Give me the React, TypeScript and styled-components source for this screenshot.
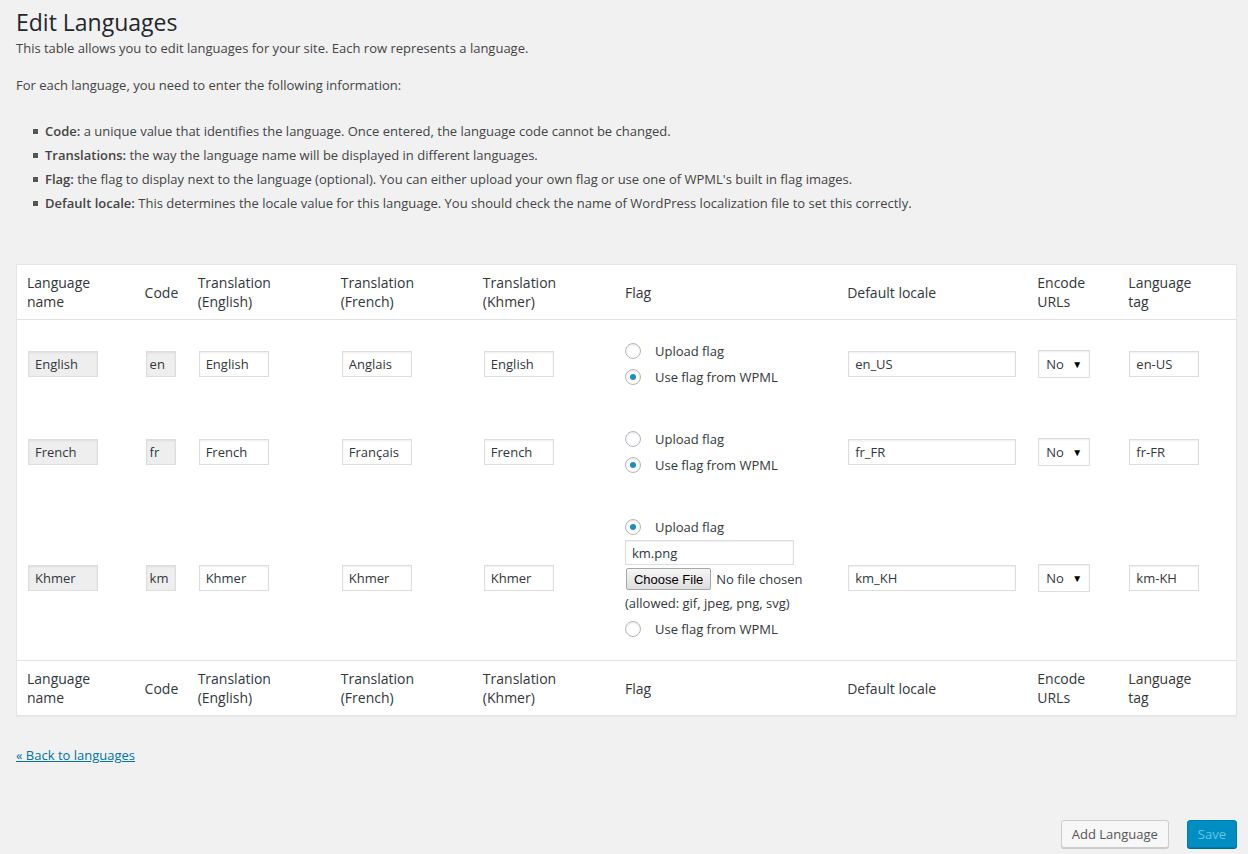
import React from "react";
import styled, { createGlobalStyle } from "styled-components";

const GlobalStyle = createGlobalStyle`
  html, body {
    margin: 0;
    padding: 0;
    background: #f1f1f1;
  }
  body {
    font-family: "Open Sans", "Liberation Sans", sans-serif;
    font-size: 13px;
    line-height: 1.5;
    color: #444;
  }
`;

type Lang = {
  name: string;
  code: string;
  english: string;
  french: string;
  khmer: string;
  locale: string;
  tag: string;
  upload: boolean;
  file?: string;
};

const languages: Lang[] = [
  { name: "English", code: "en", english: "English", french: "Anglais", khmer: "English", locale: "en_US", tag: "en-US", upload: false },
  { name: "French", code: "fr", english: "French", french: "Français", khmer: "French", locale: "fr_FR", tag: "fr-FR", upload: false },
  { name: "Khmer", code: "km", english: "Khmer", french: "Khmer", khmer: "Khmer", locale: "km_KH", tag: "km-KH", upload: true, file: "km.png" },
];

const columns = [
  { label: ["Language", "name"], width: 118 },
  { label: ["Code"], width: 53 },
  { label: ["Translation", "(English)"], width: 143 },
  { label: ["Translation", "(French)"], width: 142 },
  { label: ["Translation", "(Khmer)"], width: 142 },
  { label: ["Flag"], width: 222 },
  { label: ["Default locale"], width: 190 },
  { label: ["Encode", "URLs"], width: 91 },
  { label: ["Language", "tag"], width: 118 },
];

const App = () => {
  const headRow = (
    <tr>
      {columns.map((c, i) => (
        <HeadCell key={i}>
          {c.label.map((l, j) => (
            <HeadLine key={j}>{l}</HeadLine>
          ))}
        </HeadCell>
      ))}
    </tr>
  );

  return (
    <>
      <GlobalStyle />
      <Wrap>
        <Title>Edit Languages</Title>
        <Intro>This table allows you to edit languages for your site. Each row represents a language.</Intro>
        <Intro $gap>For each language, you need to enter the following information:</Intro>
        <InfoList>
          <InfoItem>
            <span>
              <b>Code:</b> a unique value that identifies the language. Once entered, the language code cannot be changed.
            </span>
          </InfoItem>
          <InfoItem>
            <span>
              <b>Translations:</b> the way the language name will be displayed in different languages.
            </span>
          </InfoItem>
          <InfoItem>
            <span>
              <b>Flag:</b> the flag to display next to the language (optional). You can either upload your own flag or use one of WPML's built in flag images.
            </span>
          </InfoItem>
          <InfoItem>
            <span>
              <b>Default locale:</b> This determines the locale value for this language. You should check the name of WordPress localization file to set this correctly.
            </span>
          </InfoItem>
        </InfoList>

        <LangTable>
          <colgroup>
            {columns.map((c, i) => (
              <col key={i} style={{ width: c.width }} />
            ))}
          </colgroup>
          <thead>{headRow}</thead>
          <tbody>
            {languages.map((l) => (
              <tr key={l.code}>
                <Cell>
                  <TextInput readOnly $disabled $w={70} value={l.name} />
                </Cell>
                <Cell>
                  <TextInput readOnly $disabled $w={30} $pad={3} value={l.code} />
                </Cell>
                <Cell>
                  <TextInput readOnly $w={70} value={l.english} />
                </Cell>
                <Cell>
                  <TextInput readOnly $w={70} value={l.french} />
                </Cell>
                <Cell>
                  <TextInput readOnly $w={70} value={l.khmer} />
                </Cell>
                <Cell>
                  <FlagBox>
                    <RadioLine>
                      <Radio $checked={l.upload} />
                      Upload flag
                    </RadioLine>
                    {l.upload && (
                      <>
                        <FileName readOnly value={l.file} />
                        <FileRow>
                          <ChooseButton type="button">Choose File</ChooseButton>
                          <span>No file chosen</span>
                        </FileRow>
                        <Allowed>(allowed: gif, jpeg, png, svg)</Allowed>
                      </>
                    )}
                    <RadioLine $after={l.upload}>
                      <Radio $checked={!l.upload} />
                      Use flag from WPML
                    </RadioLine>
                  </FlagBox>
                </Cell>
                <Cell>
                  <TextInput readOnly $w={168} value={l.locale} />
                </Cell>
                <Cell>
                  <SelectBox>
                    <span>No</span>
                    <Caret>▼</Caret>
                  </SelectBox>
                </Cell>
                <Cell>
                  <TextInput readOnly $w={70} value={l.tag} />
                </Cell>
              </tr>
            ))}
          </tbody>
          <tfoot>{headRow}</tfoot>
        </LangTable>

        <BackLink href="#">« Back to languages</BackLink>

        <Actions>
          <Button type="button">Add Language</Button>
          <Button type="button" $primary>
            Save
          </Button>
        </Actions>
      </Wrap>
    </>
  );
};

export default App;

const Wrap = styled.div`
  padding: 0 11px 0 16px;
  min-height: 854px;
  box-sizing: border-box;
`;

const Title = styled.h1`
  margin: 0;
  padding-top: 8px;
  font-size: 23px;
  font-weight: 400;
  line-height: 29px;
  color: #23282d;
`;

const Intro = styled.p<{ $gap?: boolean }>`
  margin: ${(p) => (p.$gap ? "17px" : "1px")} 0 0;
  line-height: 20px;
  color: #444;
`;

const InfoList = styled.ul`
  list-style: none;
  margin: 27px 0 0;
  padding: 0;
`;

const InfoItem = styled.li`
  display: flex;
  align-items: center;
  padding-left: 17px;
  height: 18px;
  margin-bottom: 6px;
  line-height: 18px;
  color: #444;

  &::before {
    content: "";
    flex: none;
    width: 5px;
    height: 5px;
    margin-right: 7px;
    background: #555;
  }

  b {
    font-weight: 600;
  }
`;

const LangTable = styled.table`
  margin-top: 52px;
  width: 100%;
  table-layout: fixed;
  border-collapse: collapse;
  border: 1px solid #e5e5e5;
  background: #fff;
  box-shadow: 0 1px 1px rgba(0, 0, 0, 0.04);
  color: #32373c;

  thead tr {
    border-bottom: 1px solid #e1e1e1;
  }
  tfoot tr {
    border-top: 1px solid #e1e1e1;
  }
`;

const HeadCell = styled.th`
  padding: 8px 10px;
  height: 38px;
  text-align: left;
  vertical-align: middle;
  font-weight: 400;
  font-size: 14px;
  line-height: 19px;
  color: #32373c;
`;

const HeadLine = styled.div`
  white-space: nowrap;
`;

const Cell = styled.td`
  padding: 18px 10px;
  vertical-align: middle;
  line-height: 26px;
`;

const TextInput = styled.input<{ $w: number; $disabled?: boolean; $pad?: number }>`
  display: block;
  box-sizing: border-box;
  width: ${(p) => p.$w}px;
  height: 26px;
  margin: 0 0 0 1px;
  padding: 0 ${(p) => p.$pad ?? 6}px;
  border: 1px solid #ddd;
  border-radius: 0;
  outline: none;
  box-shadow: inset 0 1px 2px rgba(0, 0, 0, 0.07);
  background: ${(p) => (p.$disabled ? "#eee" : "#fff")};
  font-family: "Open Sans", "Liberation Sans", sans-serif;
  font-size: 13px;
  color: #32373c;
`;

const FlagBox = styled.div`
  display: flex;
  flex-direction: column;
  align-items: flex-start;
`;

const RadioLine = styled.label<{ $after?: boolean }>`
  display: flex;
  align-items: center;
  height: 26px;
  margin-top: ${(p) => (p.$after ? "1px" : "0")};
  font-size: 13px;
  color: #32373c;
  white-space: nowrap;
`;

const Radio = styled.span<{ $checked: boolean }>`
  box-sizing: border-box;
  width: 16px;
  height: 16px;
  margin-right: 14px;
  border: 1px solid #b4b9be;
  border-radius: 50%;
  background: #fff;
  box-shadow: inset 0 1px 2px rgba(0, 0, 0, 0.1);
  display: flex;
  align-items: center;
  justify-content: center;

  &::after {
    content: "";
    display: ${(p) => (p.$checked ? "block" : "none")};
    width: 6px;
    height: 6px;
    border-radius: 50%;
    background: #1e8cbe;
  }
`;

const FileName = styled.input`
  box-sizing: border-box;
  width: 169px;
  height: 25px;
  margin: 0;
  padding: 0 6px;
  border: 1px solid #ddd;
  outline: none;
  box-shadow: inset 0 1px 2px rgba(0, 0, 0, 0.07);
  background: #fff;
  font-family: "Open Sans", "Liberation Sans", sans-serif;
  font-size: 13px;
  color: #32373c;
`;

const FileRow = styled.div`
  display: flex;
  align-items: center;
  gap: 5px;
  height: 24px;
  margin-top: 2px;
  font-size: 13px;
  color: #32373c;
  white-space: nowrap;
`;

const ChooseButton = styled.button`
  box-sizing: border-box;
  height: 22px;
  margin: 0 0 0 1px;
  padding: 0 7px;
  border: 1px solid #a6a6a6;
  border-radius: 2px;
  background: linear-gradient(#f6f6f6, #dedede);
  font-family: "Liberation Sans", Arial, sans-serif;
  font-size: 13px;
  color: #000;
`;

const Allowed = styled.div`
  height: 24px;
  line-height: 24px;
  font-size: 13px;
  color: #32373c;
  white-space: nowrap;
`;

const SelectBox = styled.div`
  box-sizing: border-box;
  width: 52px;
  height: 28px;
  margin-left: 1px;
  padding: 0 7px;
  display: flex;
  align-items: center;
  justify-content: space-between;
  border: 1px solid #ddd;
  background: #fff;
  box-shadow: inset 0 1px 2px rgba(0, 0, 0, 0.07);
  font-size: 13px;
  color: #32373c;
`;

const Caret = styled.span`
  font-size: 10px;
  color: #000;
  line-height: 1;
`;

const BackLink = styled.a`
  display: inline-block;
  margin-top: 29px;
  line-height: 20px;
  font-size: 13px;
  color: #0073aa;
  text-decoration: underline;
`;

const Actions = styled.div`
  display: flex;
  justify-content: flex-end;
  gap: 18px;
  margin-top: 54px;
`;

const Button = styled.button<{ $primary?: boolean }>`
  box-sizing: border-box;
  height: 28px;
  padding: 0 10px 1px;
  border: 1px solid ${(p) => (p.$primary ? "#007cb2" : "#ccc")};
  border-radius: 3px;
  background: ${(p) => (p.$primary ? "#008ec2" : "#f7f7f7")};
  box-shadow: 0 1px 0 ${(p) => (p.$primary ? "#006799" : "#ccc")};
  font-family: "Open Sans", "Liberation Sans", sans-serif;
  font-size: 13px;
  line-height: 26px;
  color: ${(p) => (p.$primary ? "#66c6e4" : "#555")};
  cursor: pointer;
`;
